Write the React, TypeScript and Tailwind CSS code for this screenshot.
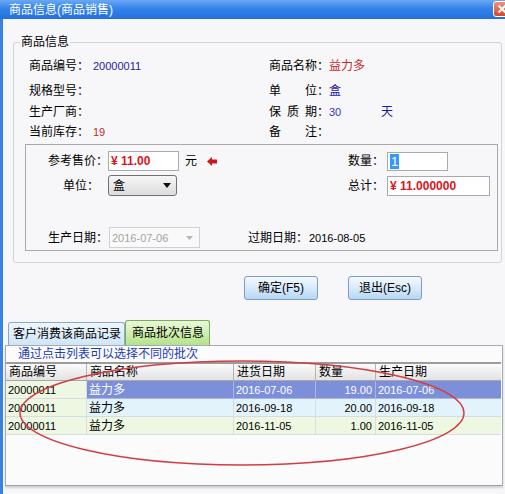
import React from "react";

const INFO_ROWS = [
  { l: "商品编号", lv: "20000011", lc: "text-[#23239a]", r: "商品名称", rv: "益力多", rc: "text-[#c42a2a]" },
  { l: "规格型号", lv: "", lc: "", r: "单位", rv: "盒", rc: "text-[#1414b4]" },
  { l: "生产厂商", lv: "", lc: "", r: "保质期", rv: "30", rc: "text-[#3434c4]", unit: "天" },
  { l: "当前库存", lv: "19", lc: "text-[#c42a2a]", r: "备注", rv: "", rc: "" },
];

const ROW_GAPS = ["mt-0", "mt-[5px]", "mt-[1px]", "mt-0"];

const BATCHES = [
  { code: "20000011", name: "益力多", inDate: "2016-07-06", qty: "19.00", made: "2016-07-06" },
  { code: "20000011", name: "益力多", inDate: "2016-09-18", qty: "20.00", made: "2016-09-18" },
  { code: "20000011", name: "益力多", inDate: "2016-11-05", qty: "1.00", made: "2016-11-05" },
];

function isLatin(s: string): boolean {
  return /^[0-9.\-]+$/.test(s);
}

function Label({ text }: { text: string }) {
  return (
    <span className="flex w-[60px] shrink-0">
      <span className="flex w-[48px] justify-between">
        {text.split("").map((c, i) => (
          <span key={i}>{c}</span>
        ))}
      </span>
      <span>：</span>
    </span>
  );
}

function Value({ v, color }: { v: string; color: string }) {
  return <span className={`${color} ${isLatin(v) ? "text-[11px]" : ""}`}>{v}</span>;
}

function HeaderCell({ w, children }: { w: string; children: React.ReactNode }) {
  return (
    <div className={`${w} flex h-full items-center border-r border-[#b4b4b4] pl-[3px] last:border-r-0`}>
      {children}
    </div>
  );
}

export default function App() {
  return (
    <div className="relative flex h-[494px] w-[505px] flex-col overflow-hidden bg-[#f7f7f9] text-[12px] leading-[16px] text-black font-['Liberation_Sans','Noto_Sans_CJK_SC',sans-serif]">
      {/* Title bar */}
      <div className="flex h-[19px] shrink-0 items-center bg-[linear-gradient(to_bottom,#6aa8f4,#3482ea_45%,#2370dc)] pl-[9px] text-white">
        <span>商品信息(商品销售)</span>
        <div className="ml-auto mt-[-2px] h-[16px] w-[12px] overflow-hidden">
          <div className="flex h-[16px] w-[18px] items-center justify-center rounded-[3px] border border-white bg-[linear-gradient(to_bottom,#f0907c,#d8482c)]">
            <svg width="10" height="10" viewBox="0 0 10 10">
              <path d="M1.5 1.5 L8.5 8.5 M8.5 1.5 L1.5 8.5" stroke="white" strokeWidth="2" />
            </svg>
          </div>
        </div>
      </div>

      {/* Body */}
      <div className="flex flex-1 flex-col border-l-[3px] border-[#3a82e2]">
        {/* Group box 商品信息 */}
        <div className="relative ml-[10px] mt-[23px] h-[221px] w-[489px] shrink-0 rounded-[3px] border border-[#cfd5dd] pl-[15px] pt-[13px]">
          <span className="absolute left-[6px] top-[-9px] bg-[#f7f7f9] px-px">商品信息</span>

          {INFO_ROWS.map((row, i) => (
            <div key={row.l} className={`flex h-[20px] items-center ${ROW_GAPS[i]}`}>
              <div className="flex w-[240px] items-center">
                <Label text={row.l} />
                <span className="ml-[4px]">
                  <Value v={row.lv} color={row.lc} />
                </span>
              </div>
              <div className="flex items-center">
                <Label text={row.r} />
                <span className="w-[52px]">
                  <Value v={row.rv} color={row.rc} />
                </span>
                {row.unit && <span className="text-[#1c1ca4]">{row.unit}</span>}
              </div>
            </div>
          ))}

          {/* Price box */}
          <div className="ml-[-4px] mt-[2px] h-[107px] w-[473px] border border-[#a9a9a9] pt-[6px]">
            <div className="flex h-[20px] items-center">
              <div className="flex w-[322px] items-center pl-[22px]">
                <span className="w-[60px]">参考售价：</span>
                <div className="flex h-[20px] w-[71px] items-center border border-[#a6abb0] bg-white pl-[2px] text-[12px] font-bold text-[#e0141c]">
                  ¥ 11.00
                </div>
                <span className="ml-[6px]">元</span>
                <svg className="ml-[10px]" width="10" height="9" viewBox="0 0 10 9">
                  <polygon points="0,4.5 5,0 5,2.5 10,2.5 10,6.5 5,6.5 5,9" fill="#d4141c" />
                </svg>
              </div>
              <span className="w-[39px]">数量：</span>
              <div className="flex h-[19px] w-[61px] items-center border border-[#a6abb0] bg-white pl-[2px]">
                <span className="bg-[#3399ff] px-px text-[13px] leading-[15px] text-white">1</span>
              </div>
            </div>

            <div className="mt-[4px] flex h-[21px] items-center">
              <div className="flex w-[322px] items-center pl-[37px]">
                <span className="w-[45px]">单位：</span>
                <div className="flex h-[21px] w-[69px] items-center justify-between rounded-[3px] border border-[#707070] bg-[linear-gradient(to_bottom,#f6f6f6,#dcdcdc)] pl-[4px] pr-[5px]">
                  <span>盒</span>
                  <svg width="8" height="5" viewBox="0 0 8 5">
                    <polygon points="0,0 8,0 4,5" fill="#111" />
                  </svg>
                </div>
              </div>
              <span className="w-[39px]">总计：</span>
              <div className="flex h-[20px] w-[103px] items-center border border-[#a6abb0] bg-white pl-[2px] font-bold text-[#e0141c]">
                ¥ 11.000000
              </div>
            </div>

            <div className="mt-[31px] flex h-[21px] items-center">
              <div className="flex items-center pl-[22px]">
                <span className="w-[60px]">生产日期：</span>
                <div className="ml-px flex h-[21px] w-[91px] items-center justify-between border border-[#cdd1d6] bg-[#f9f9f9] pl-[2px] pr-[6px] text-[11px] text-[#a4a4a4]">
                  <span>2016-07-06</span>
                  <svg width="7" height="4" viewBox="0 0 7 4">
                    <polygon points="0,0 7,0 3.5,4" fill="#b8b8b8" />
                  </svg>
                </div>
              </div>
              <span className="ml-[48px] w-[60px]">过期日期：</span>
              <span className="ml-px text-[11px]">2016-08-05</span>
            </div>
          </div>
        </div>

        {/* Buttons */}
        <div className="ml-[241px] mt-[13px] flex h-[24px] shrink-0 gap-[30px]">
          {["确定(F5)", "退出(Esc)"].map((t) => (
            <button
              key={t}
              className="flex h-[24px] w-[74px] items-center justify-center rounded-[3px] border border-[#7e9cc0] bg-[linear-gradient(to_bottom,#f4f9fe,#d8eafb_50%,#b6d6f4)] text-[12px]"
            >
              {t}
            </button>
          ))}
        </div>

        {/* Tabs */}
        <div className="ml-[5px] mt-[20px] flex h-[25px] shrink-0 items-end">
          <div className="flex h-[23px] w-[117px] items-center rounded-t-[3px] border border-b-0 border-[#8ca8c8] bg-[linear-gradient(to_bottom,#eef6fd,#cfe5f8)] pl-[4px] text-[12px]">
            客户消费该商品记录
          </div>
          <div className="flex h-[25px] w-[85px] items-center rounded-t-[3px] border border-b-0 border-[#78ae58] bg-[linear-gradient(to_bottom,#eaf8d8,#b4e28a)] pl-[6px] text-[12px]">
            商品批次信息
          </div>
        </div>

        {/* Tab panel */}
        <div className="ml-[2px] h-[141px] w-[498px] shrink-0 border border-[#a4abb2] border-b-[#9aa0a6] bg-[#fbfbfc] shadow-[0_2px_2px_rgba(0,0,0,0.16)]">
          <div className="h-[16px] pl-[12px] text-[#1b3cb4]">通过点击列表可以选择不同的批次</div>
          <div className="w-[495px]">
            <div className="flex h-[19px] border-t-2 border-b border-t-[#9c9c9c] border-b-[#a8a8a8] bg-[linear-gradient(to_bottom,#fbfbfb,#e2e2e2)]">
              <HeaderCell w="w-[81px]">商品编号</HeaderCell>
              <HeaderCell w="w-[147px]">商品名称</HeaderCell>
              <HeaderCell w="w-[82px]">进货日期</HeaderCell>
              <HeaderCell w="w-[60px]">数量</HeaderCell>
              <HeaderCell w="w-[125px]">生产日期</HeaderCell>
            </div>
            {BATCHES.map((b, i) => {
              const sel = i === 0;
              const rowBg = i === 1 ? "bg-[#e3f3fb]" : "bg-[#eef7e1]";
              const cell = sel ? "bg-[#7c8fd8] text-white border-[#a9b6e6]" : `${rowBg} border-[#d6dde2]`;
              return (
                <div key={i} className="flex h-[18px] text-[11px]">
                  <div className="flex w-[81px] items-center border-r border-b border-[#d6dde2] bg-[#eef7e1] pl-[2px]">{b.code}</div>
                  <div className={`flex w-[147px] items-center border-r border-b pl-[2px] text-[12px] ${cell}`}>{b.name}</div>
                  <div className={`flex w-[82px] items-center border-r border-b pl-[2px] ${cell}`}>{b.inDate}</div>
                  <div className={`flex w-[60px] items-center justify-end border-r border-b pr-[3px] ${cell}`}>{b.qty}</div>
                  <div className={`flex w-[125px] items-center border-b pl-[2px] ${cell}`}>{b.made}</div>
                </div>
              );
            })}
          </div>
        </div>
      </div>

      {/* Red hand-drawn ellipse annotation */}
      <svg className="pointer-events-none absolute left-0 top-0" width="505" height="494" viewBox="0 0 505 494">
        <ellipse cx="242" cy="413" rx="222" ry="52" fill="none" stroke="#d43c44" strokeWidth="1.4" />
      </svg>
    </div>
  );
}
